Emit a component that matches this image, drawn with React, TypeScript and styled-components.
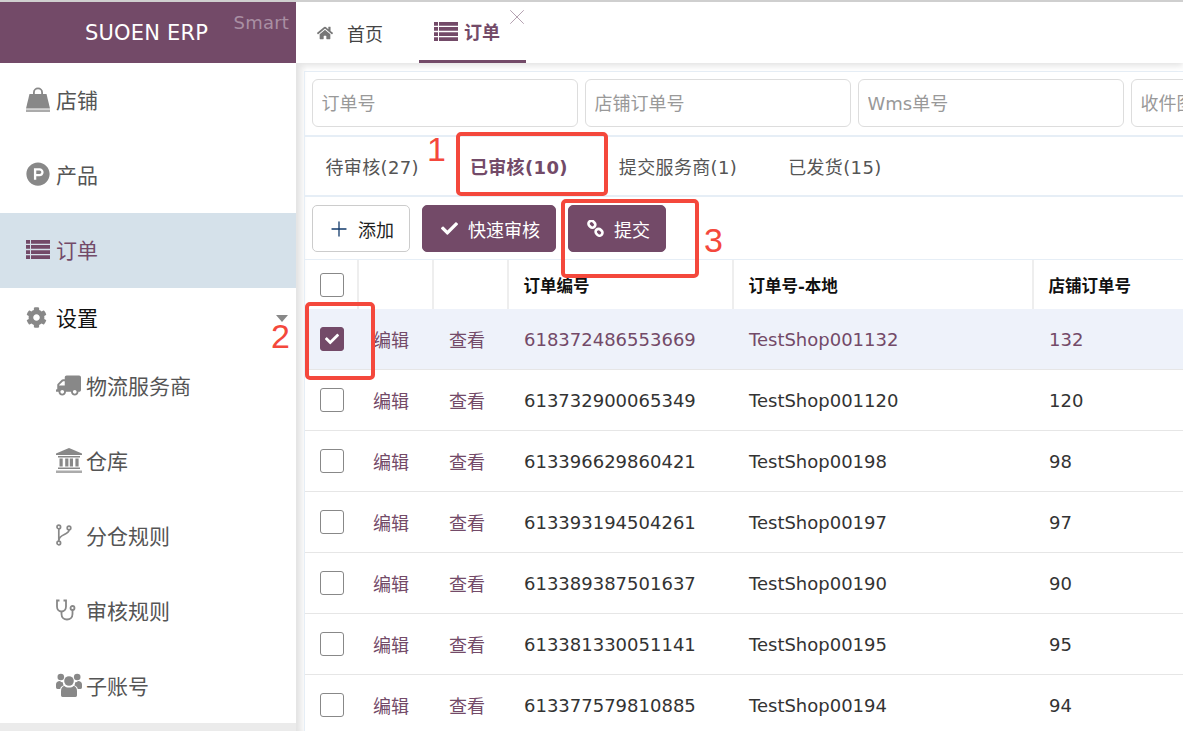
import React from 'react';
import styled, { createGlobalStyle } from 'styled-components';
import { FaCheck, FaCog, FaHome, FaProductHunt, FaTruck } from 'react-icons/fa';
import { Plus, X } from 'lucide-react';

const PURPLE = '#734a68';
const FONT = '"DejaVu Sans", "Noto Sans CJK SC", sans-serif';

const GlobalStyle = createGlobalStyle`
    html, body {
        margin: 0;
        height: 100%;
        overflow: hidden;
        background: #ebebeb;
        font-family: ${FONT};
    }
    * { box-sizing: border-box; }
`;

const Page = styled.div`
    position: relative;
    width: 1183px;
    height: 731px;
    overflow: hidden;
    border-top: 2px solid #cfcfcf;
    display: flex;
`;

const Sidebar = styled.aside`
    width: 296px;
    height: 721px;
    flex: none;
    background: #fff;
    position: relative;
    z-index: 2;
`;

const Brand = styled.div`
    height: 61px;
    padding-right: 3px;
    background: ${PURPLE};
    color: #fff;
    font-size: 21px;
    letter-spacing: 0.2px;
    display: flex;
    align-items: center;
    justify-content: center;
    position: relative;
`;

const Smart = styled.span`
    position: absolute;
    right: 7px;
    top: 10px;
    font-size: 18px;
    color: #a98fa3;
`;

const NavItem = styled.div<{ $active?: boolean; $sub?: boolean; $tall?: boolean }>`
    height: ${p => (p.$tall ? 61 : 75)}px;
    padding-left: ${p => (p.$sub ? 56 : 26)}px;
    padding-bottom: 3px;
    display: flex;
    align-items: center;
    position: relative;
    font-size: 21px;
    background: ${p => (p.$active ? '#d5e1ea' : 'transparent')};
    color: ${p => (p.$active ? PURPLE : '#555')};
    svg { color: ${p => (p.$active ? PURPLE : '#888')}; }
`;

const NavIcon = styled.span`
    width: 30px;
    flex: none;
    display: flex;
    align-items: center;
`;

const NavLabel = styled.span<{ $dark?: boolean }>`
    color: ${p => (p.$dark ? '#111' : 'inherit')};
`;

const Caret = styled.span`
    position: absolute;
    left: 276px;
    top: 27px;
    border-left: 6px solid transparent;
    border-right: 6px solid transparent;
    border-top: 7px solid #888;
`;

const TruckIcon = styled(FaTruck)`
    transform: scaleX(-1);
`;

const Main = styled.main`
    flex: 1;
    min-width: 0;
    height: 729px;
    background: #fff;
    box-shadow: inset 9px 0 7px -4px #e2e2e2;
`;

const TabBar = styled.div`
    height: 61px;
    display: flex;
    background: #fff;
    box-shadow: 0 3px 6px #e4e4e4;
    position: relative;
`;

const HomeTab = styled.div`
    width: 123px;
    padding-left: 21px;
    display: flex;
    align-items: center;
    gap: 14px;
    font-size: 18px;
    color: #444;
    svg { color: #777; }
`;

const OrderTab = styled.div`
    width: 107px;
    padding-left: 15px;
    display: flex;
    align-items: center;
    gap: 6px;
    font-size: 18px;
    font-weight: 700;
    color: ${PURPLE};
    border-bottom: 3px solid ${PURPLE};
    position: relative;
`;

const CloseMark = styled.span`
    position: absolute;
    right: -4px;
    top: 2px;
    display: flex;
    color: #b39fb0;
`;

const Panel = styled.div`
    margin: 8px 0 0 8px;
    border-left: 1px solid #e6eef6;
    border-top: 1px solid #e6eef6;
`;

const SearchRow = styled.div`
    height: 65px;
    padding: 7px 0 0 7px;
    display: flex;
    gap: 7px;
    border-bottom: 2px solid #e6eef6;
`;

const SearchInput = styled.input`
    width: 266px;
    height: 48px;
    flex: none;
    padding: 0 8.5px;
    border: 1px solid #ddd;
    border-radius: 6px;
    outline: none;
    font-family: ${FONT};
    font-size: 18px;
    &::placeholder { color: #999; opacity: 1; }
`;

const StatusRow = styled.div`
    height: 60px;
    display: flex;
    align-items: center;
    border-bottom: 2px solid #e6eef6;
`;

const StatusTab = styled.div<{ $active?: boolean }>`
    padding: 0 26px 0 20.5px;
    margin-right: 4.5px;
    font-size: 18px;
    letter-spacing: 0.35px;
    font-weight: ${p => (p.$active ? 700 : 400)};
    color: ${p => (p.$active ? PURPLE : '#555')};
`;

const Toolbar = styled.div`
    height: 62px;
    padding: 8px 0 0 7px;
    display: flex;
    align-items: flex-start;
    gap: 12px;
`;

const Button = styled.button`
    height: 47px;
    padding: 0 15px 0 18px;
    display: flex;
    align-items: center;
    gap: 10px;
    border: 1px solid ${PURPLE};
    border-radius: 5px;
    background: ${PURPLE};
    color: #fff;
    font-family: ${FONT};
    font-size: 18px;
`;

const AddButton = styled(Button)`
    padding: 0 15px 0 14px;
    gap: 7px;
    border-color: #ccc;
    background: #fff;
    color: #222;
`;

const COLUMNS = '54px 75px 75px 225px 300px 1fr';

const HeaderRow = styled.div`
    display: grid;
    grid-template-columns: ${COLUMNS};
    height: 50px;
    border-top: 1px solid #e6eef6;
    color: #111;
    font-size: 16.5px;
    font-weight: 700;
`;

const HeaderCell = styled.div`
    display: flex;
    align-items: center;
    padding-left: 14.5px;
    border-right: 2px solid #eee;
    &:first-child { padding-left: 15px; }
    &:last-child { border-right: 0; }
`;

const Row = styled.div<{ $selected?: boolean }>`
    display: grid;
    grid-template-columns: ${COLUMNS};
    height: 61px;
    border-bottom: 1px solid #e6e6e6;
    background: ${p => (p.$selected ? '#eef2fa' : '#fff')};
    color: ${p => (p.$selected ? PURPLE : '#333')};
    font-size: 18px;
`;

const Cell = styled.div`
    display: flex;
    align-items: center;
    padding-left: 15px;
    white-space: nowrap;
`;

const LinkCell = styled(Cell)<{ $tight?: boolean }>`
    padding-left: ${p => (p.$tight ? 14 : 15)}px;
    color: ${PURPLE};
`;

const Check = styled.span<{ $on?: boolean }>`
    width: 24px;
    height: 24px;
    display: flex;
    align-items: center;
    justify-content: center;
    border: 1px solid ${p => (p.$on ? PURPLE : '#888')};
    border-radius: 3px;
    background: ${p => (p.$on ? PURPLE : '#fff')};
    color: #fff;
`;

const MarkBox = styled.div<{ $x: number; $y: number; $w: number; $h: number }>`
    position: absolute;
    left: ${p => p.$x}px;
    top: ${p => p.$y - 2}px;
    width: ${p => p.$w}px;
    height: ${p => p.$h}px;
    border: 4px solid #f4483c;
    border-radius: 5px;
    z-index: 5;
`;

const MarkNumber = styled.span<{ $x: number; $y: number }>`
    position: absolute;
    left: ${p => p.$x}px;
    top: ${p => p.$y - 2}px;
    color: #f4483c;
    font-family: "Liberation Sans", sans-serif;
    font-size: 34px;
    line-height: 38px;
    z-index: 5;
`;

const BagIcon = () => (
    <svg width="24" height="25" viewBox="0 0 24 25" fill="currentColor">
        <path d="M7 8V5.500a5 5 0 0 1 10 0V8h-1.800V5.500a3.200 3.200 0 0 0-6.400 0V8z" />
        <path d="M3.500 7h17L24 21.500H0z" />
        <rect x="0" y="22.500" width="24" height="2.500" opacity="0.7" />
    </svg>
);

const ListIcon = () => (
    <svg width="24" height="19" viewBox="0 0 24 19" fill="currentColor">
        <path d="M0 0h4v3.700H0zM5 0h19v3.700H5zM0 5.100h4v3.700H0zM5 5.100h19v3.700H5zM0 10.200h4v3.700H0zM5 10.200h19v3.700H5zM0 15.300h4V19H0zM5 15.300h19V19H5z" />
    </svg>
);

const BankIcon = () => (
    <svg width="26" height="25" viewBox="0 0 26 25" fill="currentColor">
        <path d="M13 0l13 5.500V7H0V5.500z" />
        <path d="M2 8h22v1.500H2zM3.500 10.500h3.200v8H3.500zM9.200 10.500h3.200v8H9.200zM13.800 10.500H17v8h-3.200zM19.400 10.500h3.200v8h-3.200zM2 19.500h22V21H2z" />
        <rect x="0" y="22.500" width="26" height="2.500" opacity="0.7" />
    </svg>
);

const BranchIcon = () => (
    <svg width="16" height="22" viewBox="0 0 16 22" fill="none" stroke="currentColor" strokeWidth="1.7">
        <circle cx="2.800" cy="3" r="1.800" />
        <circle cx="2.800" cy="19" r="1.800" />
        <circle cx="13" cy="4" r="1.800" />
        <path d="M2.800 5v12M13 6c0 5-10 4-10 10" />
    </svg>
);

const StethoIcon = () => (
    <svg width="20" height="22" viewBox="0 0 20 22" fill="none" stroke="currentColor" strokeWidth="1.800">
        <path d="M3.500 1.500H1v6c0 3 2 5 4.500 5s4.500-2 4.500-5v-6H7.500" />
        <path d="M5.500 12.500v2.500c0 3.500 2.500 5.500 5.500 5.500s5.500-2 5.500-5.500v-4" />
        <circle cx="16.500" cy="9" r="2" />
    </svg>
);

const UsersIcon = () => (
    <svg width="26" height="24" viewBox="0 0 26 24" fill="currentColor">
        <circle cx="13" cy="8" r="4.800" />
        <circle cx="4.800" cy="4" r="3.300" />
        <circle cx="21.200" cy="4" r="3.300" />
        <path d="M6.500 24c-1 0-1.500-.8-1.500-2v-4c0-3.500 2-5 3.500-5 1 1 2.500 1.600 4.500 1.600s3.500-.6 4.500-1.600c1.500 0 3.500 1.500 3.500 5v4c0 1.200-.5 2-1.500 2z" />
        <path d="M4 8c.6.800 1.800 1.300 3 1.400-.2 1.200.2 2.200.8 2.900C5.700 13 4.400 14.500 4.200 16H1.500C.5 16 0 15.300 0 14v-2.500C0 9.500 1.500 8 4 8zM22 8c-.6.800-1.800 1.300-3 1.400.2 1.200-.2 2.200-.8 2.900 2.100.7 3.400 2.200 3.600 3.700h2.700c1 0 1.500-.7 1.500-2v-2.500C26 9.500 24.500 8 22 8z" />
    </svg>
);

const ChainIcon = () => (
    <svg width="17" height="17" viewBox="0 0 19 19" fill="none" stroke="#fff" strokeWidth="3">
        <rect x="1.500" y="1.500" width="8" height="6.500" rx="3.200" transform="rotate(45 5.500 4.700)" />
        <rect x="9.500" y="10.500" width="8" height="6.500" rx="3.200" transform="rotate(45 13.500 13.700)" />
    </svg>
);

const subNav = [
    { label: '物流服务商', icon: <TruckIcon size={25} /> },
    { label: '仓库', icon: <BankIcon /> },
    { label: '分仓规则', icon: <BranchIcon /> },
    { label: '审核规则', icon: <StethoIcon /> },
    { label: '子账号', icon: <UsersIcon /> },
];

const orders = [
    { no: '618372486553669', local: 'TestShop001132', shop: '132' },
    { no: '613732900065349', local: 'TestShop001120', shop: '120' },
    { no: '613396629860421', local: 'TestShop00198', shop: '98' },
    { no: '613393194504261', local: 'TestShop00197', shop: '97' },
    { no: '613389387501637', local: 'TestShop00190', shop: '90' },
    { no: '613381330051141', local: 'TestShop00195', shop: '95' },
    { no: '613377579810885', local: 'TestShop00194', shop: '94' },
];

export default function App() {
    return (
        <Page>
            <GlobalStyle />
            <Sidebar>
                <Brand>
                    SUOEN ERP
                    <Smart>Smart</Smart>
                </Brand>
                <NavItem>
                    <NavIcon><BagIcon /></NavIcon>
                    <NavLabel>店铺</NavLabel>
                </NavItem>
                <NavItem>
                    <NavIcon><FaProductHunt size={24} /></NavIcon>
                    <NavLabel>产品</NavLabel>
                </NavItem>
                <NavItem $active>
                    <NavIcon><ListIcon /></NavIcon>
                    <NavLabel>订单</NavLabel>
                </NavItem>
                <NavItem $tall>
                    <NavIcon><FaCog size={21} /></NavIcon>
                    <NavLabel $dark>设置</NavLabel>
                    <Caret />
                </NavItem>
                {subNav.map(item => (
                    <NavItem $sub key={item.label}>
                        <NavIcon>{item.icon}</NavIcon>
                        <NavLabel>{item.label}</NavLabel>
                    </NavItem>
                ))}
            </Sidebar>

            <Main>
                <TabBar>
                    <HomeTab><FaHome size={16} />首页</HomeTab>
                    <OrderTab>
                        <ListIcon />订单
                        <CloseMark><X size={26} strokeWidth={0.9} /></CloseMark>
                    </OrderTab>
                </TabBar>
                <Panel>
                    <SearchRow>
                        <SearchInput placeholder="订单号" />
                        <SearchInput placeholder="店铺订单号" />
                        <SearchInput placeholder="Wms单号" />
                        <SearchInput placeholder="收件图" />
                    </SearchRow>
                    <StatusRow>
                        <StatusTab>待审核(27)</StatusTab>
                        <StatusTab $active>已审核(10)</StatusTab>
                        <StatusTab>提交服务商(1)</StatusTab>
                        <StatusTab>已发货(15)</StatusTab>
                    </StatusRow>
                    <Toolbar>
                        <AddButton><Plus size={24} color="#123a6b" strokeWidth={1.3} />添加</AddButton>
                        <Button><FaCheck size={17} />快速审核</Button>
                        <Button><ChainIcon />提交</Button>
                    </Toolbar>
                    <HeaderRow>
                        <HeaderCell><Check /></HeaderCell>
                        <HeaderCell />
                        <HeaderCell />
                        <HeaderCell>订单编号</HeaderCell>
                        <HeaderCell>订单号-本地</HeaderCell>
                        <HeaderCell>店铺订单号</HeaderCell>
                    </HeaderRow>
                    {orders.map((order, i) => (
                        <Row key={order.no} $selected={i === 0}>
                            <Cell>
                                <Check $on={i === 0}>{i === 0 && <FaCheck size={14} />}</Check>
                            </Cell>
                            <LinkCell $tight>编辑</LinkCell>
                            <LinkCell>查看</LinkCell>
                            <Cell>{order.no}</Cell>
                            <Cell>{order.local}</Cell>
                            <Cell>{order.shop}</Cell>
                        </Row>
                    ))}
                </Panel>
            </Main>

            <MarkBox $x={456} $y={132} $w={152} $h={64} />
            <MarkBox $x={305} $y={302} $w={70} $h={78} />
            <MarkBox $x={561} $y={199} $w={138} $h={79} />
            <MarkNumber $x={427} $y={130}>1</MarkNumber>
            <MarkNumber $x={271} $y={317}>2</MarkNumber>
            <MarkNumber $x={704} $y={221}>3</MarkNumber>
        </Page>
    );
}
